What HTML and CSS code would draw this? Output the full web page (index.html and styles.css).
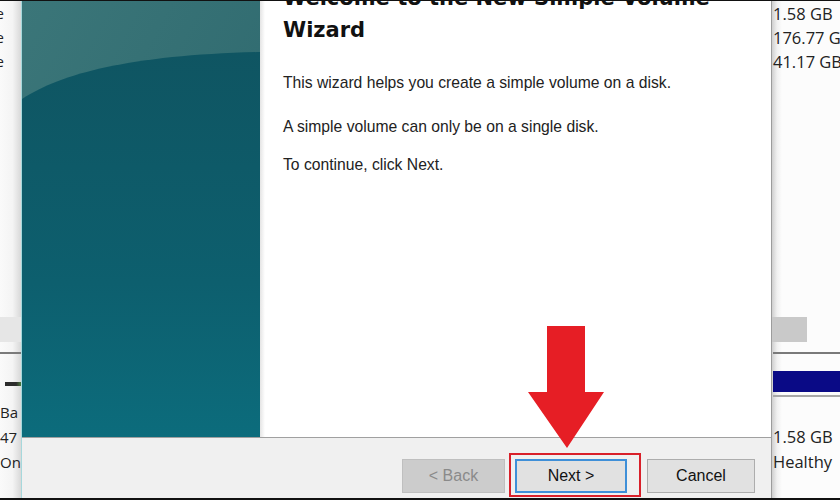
FILE: index.html
```html
<!DOCTYPE html>
<html lang="en">
<head>
    <meta charset="UTF-8">
    <meta name="viewport" content="width=device-width, initial-scale=1.0">
    <title>New Simple Volume Wizard</title>
    <link rel="stylesheet" href="styles.css">
</head>
<body>

    <div class="screen">

        <!-- Disk Management, left edge behind the dialog -->
        <div class="desk desk-left">
            <div class="desk-list">
                <span class="clip">e</span>
                <span class="clip">e</span>
                <span class="clip">e</span>
            </div>
            <div class="desk-band"></div>
            <div class="desk-rule"></div>
            <div class="desk-bar"></div>
            <div class="desk-disk">
                <span>Ba</span>
                <span>47</span>
                <span>On</span>
            </div>
        </div>

        <!-- Wizard dialog -->
        <div class="wizard">
            <div class="wizard-main">
                <div class="banner">
                    <svg width="238" height="436" viewBox="0 0 238 436">
                        <defs>
                            <linearGradient id="sky" x1="0" y1="0" x2="1" y2="1">
                                <stop offset="0" stop-color="#3b7679"/>
                                <stop offset="1" stop-color="#2b666c"/>
                            </linearGradient>
                            <linearGradient id="hill" x1="0" y1="0" x2="0" y2="1">
                                <stop offset="0" stop-color="#0f5562"/>
                                <stop offset="0.6" stop-color="#0d5f6e"/>
                                <stop offset="1" stop-color="#0c6c7c"/>
                            </linearGradient>
                        </defs>
                        <rect width="238" height="436" fill="url(#sky)"/>
                        <path d="M0,98 C40,72 110,54 238,51 L238,436 L0,436 Z" fill="url(#hill)"/>
                    </svg>
                </div>
                <div class="content">
                    <h1>Welcome to the New Simple Volume Wizard</h1>
                    <p class="intro">This wizard helps you create a simple volume on a disk.</p>
                    <p class="note">A simple volume can only be on a single disk.</p>
                    <p class="hint">To continue, click Next.</p>
                </div>
            </div>
            <div class="wizard-buttons">
                <button class="btn btn-back" disabled>&lt; Back</button>
                <span class="mark">
                    <button class="btn btn-next">Next &gt;</button>
                </span>
                <button class="btn btn-cancel">Cancel</button>
            </div>
        </div>

        <!-- Disk Management, right edge behind the dialog -->
        <div class="desk desk-right">
            <div class="desk-list">
                <span>1.58 GB</span>
                <span>176.77 GB</span>
                <span>41.17 GB</span>
            </div>
            <div class="desk-band"></div>
            <div class="desk-rule"></div>
            <div class="desk-bar"></div>
            <div class="desk-under"></div>
            <div class="desk-disk">
                <span>1.58 GB</span>
                <span>Healthy</span>
            </div>
        </div>

        <!-- Red arrow pointing at Next -->
        <svg class="arrow" width="76" height="122" viewBox="0 0 76 122">
            <path d="M19,0 L57,0 L57,66 L76,66 L39,122 L0,66 L19,66 Z" fill="#e61e25"/>
        </svg>
    </div>

</body>
</html>
```

FILE: styles.css
```css
/* General */
body {
    margin: 0;
    background: #111;
}

.screen {
    position: relative;
    width: 840px;
    height: 500px;
    box-sizing: border-box;
    border-top: 1px solid #111;
    border-bottom: 2px solid #111;
    display: grid;
    grid-template-columns: 21px 751px 68px;
    overflow: hidden;
    background: #fbfbfb;
}

/* Disk Management behind the dialog */
.desk {
    display: flex;
    flex-direction: column;
    font-family: "Open Sans", "Noto Sans", sans-serif;
    font-size: 16.5px;
    color: #222;
    overflow: hidden;
    white-space: nowrap;
}

.desk-left {
    background: linear-gradient(to right, #fafafa 0, #f4f4f4 60%, #d8d8d8 100%);
}

.desk-right {
    background: linear-gradient(to right, #cfcfcf 0, #f0f0f0 5px, #fcfcfc 10px);
    padding-left: 1px;
}

.desk-list {
    display: flex;
    flex-direction: column;
    line-height: 24px;
    padding-top: 1px;
    height: 315px;
}

.desk-left .desk-list {
    font-size: 14px;
}

.desk-left .clip {
    margin-left: -4px;
}

.desk-band {
    height: 25px;
    background: #e6e6e6;
}

.desk-right .desk-band {
    width: 35px;
    margin-left: -1px;
    background: #c9c9c9;
}

.desk-rule {
    height: 2px;
    margin-top: 10px;
    background: #7a7a7a;
}

.desk-left .desk-bar {
    width: 16px;
    height: 4px;
    margin: 28px 0 0 5px;
    background: linear-gradient(to right, #2c2c2c 70%, #4c7a3c);
}

.desk-right .desk-bar {
    height: 21px;
    margin-top: 17px;
    background: #0a0a86;
}

.desk-under {
    height: 2px;
    margin-top: 3px;
    background: #a8a8a8;
}

.desk-disk {
    display: flex;
    flex-direction: column;
    line-height: 25px;
}

.desk-left .desk-disk {
    margin-top: 14px;
    font-size: 15px;
}

.desk-right .desk-disk {
    margin-top: 27px;
}

/* Wizard window */
.wizard {
    display: flex;
    flex-direction: column;
    border-left: 1px solid #a6d8dc;
    border-right: 1px solid #9c9c9c;
    background: #fff;
}

.wizard-main {
    display: flex;
    height: 436px;
}

.banner {
    width: 238px;
    flex: none;
}

.banner svg {
    display: block;
}

.content {
    flex: 1;
    padding: 0 23px;
    background: linear-gradient(to right, #e4e4e4 0, #ffffff 5px);
    overflow: hidden;
}

.content h1 {
    font-family: "DejaVu Sans", Verdana, sans-serif;
    font-weight: bold;
    font-size: 21px;
    line-height: 32px;
    color: #111;
    margin: -19px 0 0 0;
}

.content p {
    font-family: "Liberation Sans", Arial, sans-serif;
    font-size: 15.7px;
    line-height: 18px;
    color: #222;
    margin: 0;
}

.content .intro {
    margin-top: 28px;
}

.content .note {
    margin-top: 26px;
}

.content .hint {
    margin-top: 20px;
}

/* Button bar */
.wizard-buttons {
    flex: 1;
    display: flex;
    align-items: flex-start;
    padding: 21px 16px 0 0;
    justify-content: flex-end;
    background: #f0f0f0;
    border-top: 1px solid #a0a0a0;
}

.btn {
    font-family: "Liberation Sans", Arial, sans-serif;
    font-size: 16px;
    height: 34px;
    padding: 0;
    border: 1px solid #adadad;
    background: #e1e1e1;
    color: #111;
}

.btn-back {
    width: 103px;
    border-color: #bfbfbf;
    background: #cccccc;
    color: #8a8a8a;
}

.btn-next {
    width: 112px;
    border: 2px solid #3e8fd8;
}

.btn-cancel {
    width: 108px;
    margin-left: 20px;
}

/* Red box drawn round the Next button */
.mark {
    position: relative;
    margin-left: 10px;
}

.mark::after {
    content: "";
    position: absolute;
    top: -6px;
    left: -6px;
    right: -14px;
    bottom: -4px;
    border: 2px solid #d9202a;
}

.arrow {
    position: absolute;
    left: 528px;
    top: 325px;
}
```
